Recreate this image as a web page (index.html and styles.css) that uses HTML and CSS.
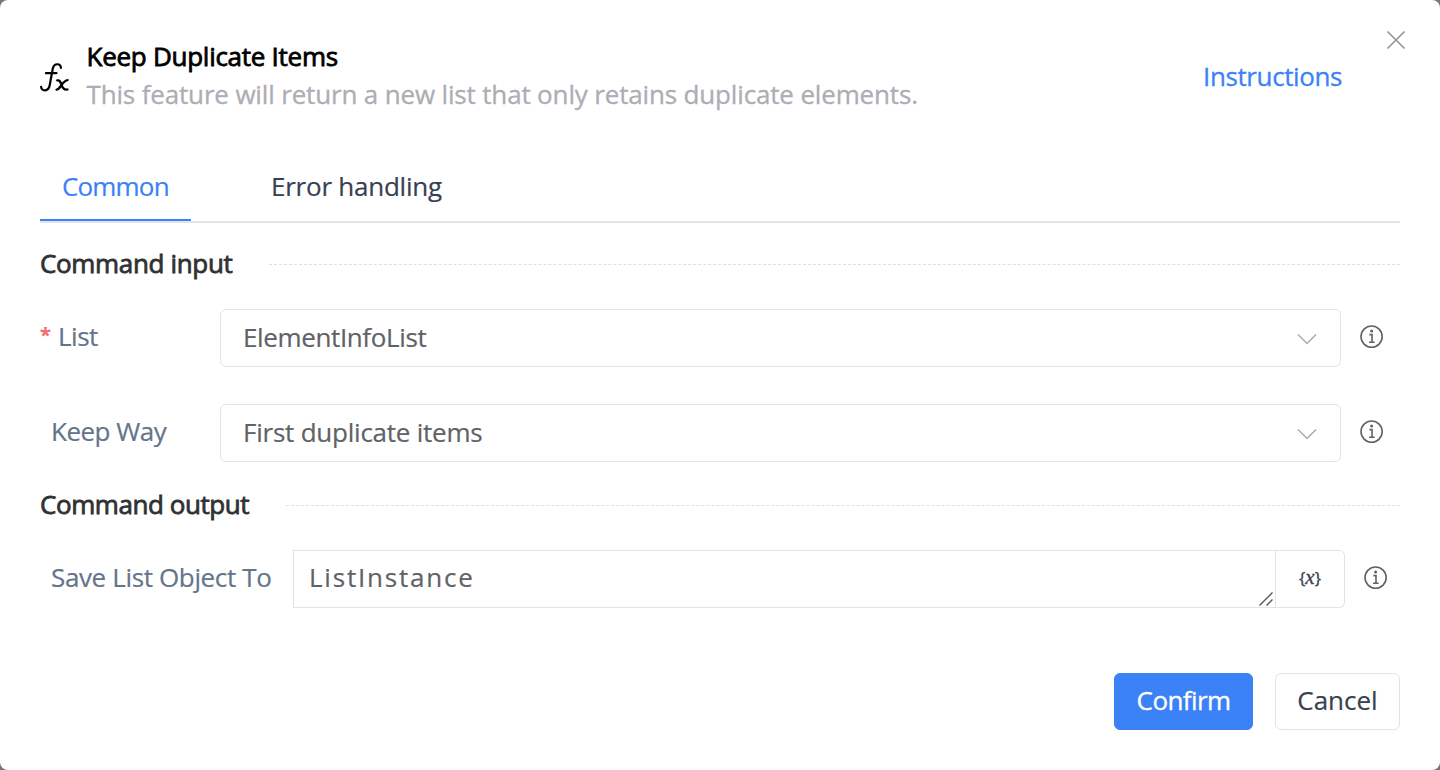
FILE: index.html
```
<!DOCTYPE html>
<html lang="en">
<head>
<meta charset="utf-8">
<title>Keep Duplicate Items</title>
<link rel="stylesheet" href="styles.css">
</head>
<body>
<div class="dialog">
  <header class="header">
    <svg class="fx" viewBox="0 0 30 32" aria-hidden="true">
      <path d="M20.9 6C21.2 1.4 14.2.4 12.8 6.5L9.7 23.3C8.5 30 1.2 29.5 1.1 24.8M6 11.2H16.5"/>
      <path class="fx-x" d="M17.2 18.4C19.9 17.9 20.4 19.8 21.5 22.9S23.8 28.3 27.5 27.5M27.6 18.1C24.8 18.2 22.6 21.5 21.2 23.4S18.4 27.7 16.6 27.6"/>
    </svg>
    <div class="heading">
      <h1 class="title">Keep Duplicate Items</h1>
      <p class="description">This feature will return a new list that only retains duplicate elements.</p>
    </div>
    <a class="instructions">Instructions</a>
    <svg class="close" viewBox="0 0 20 20" aria-hidden="true"><path d="M1.5 1.5 18.5 18.5M18.5 1.5 1.5 18.5"/></svg>
  </header>
  <nav class="tabs">
    <a class="tab tab-active">Common</a>
    <a class="tab tab-error">Error handling</a>
  </nav>
  <h2 class="section section-input">Command input</h2>
  <div class="row">
    <label class="label label-required"><i class="star">*</i>List</label>
    <div class="select">ElementInfoList
      <svg class="chevron" viewBox="0 0 20 12" aria-hidden="true"><path d="M1 1.5 10 10.5 19 1.5"/></svg></div>
    <svg class="info" viewBox="0 0 24 24" aria-hidden="true"><circle cx="11.6" cy="11.6" r="10.6"/><path d="M9.4 9.6H12V17.2M9 17.2H14.6"/><circle class="dot" cx="11.6" cy="6" r="1.5"/></svg>
  </div>
  <div class="row row-way">
    <label class="label">Keep Way</label>
    <div class="select select-way">First duplicate items
      <svg class="chevron" viewBox="0 0 20 12" aria-hidden="true"><path d="M1 1.5 10 10.5 19 1.5"/></svg></div>
    <svg class="info" viewBox="0 0 24 24" aria-hidden="true"><circle cx="11.6" cy="11.6" r="10.6"/><path d="M9.4 9.6H12V17.2M9 17.2H14.6"/><circle class="dot" cx="11.6" cy="6" r="1.5"/></svg>
  </div>
  <h2 class="section section-output">Command output</h2>
  <div class="row row-output">
    <label class="label label-wide">Save List Object To</label>
    <div class="field">ListInstance
      <svg class="grip" viewBox="0 0 16 16" aria-hidden="true"><path d="M1.5 14.5 14.5 1.5M8.5 14.5 14.5 8.5"/></svg></div>
    <button class="variable" aria-label="Insert variable">{<i class="var-x">x</i>}</button>
    <svg class="info" viewBox="0 0 24 24" aria-hidden="true"><circle cx="11.6" cy="11.6" r="10.6"/><path d="M9.4 9.6H12V17.2M9 17.2H14.6"/><circle class="dot" cx="11.6" cy="6" r="1.5"/></svg>
  </div>
  <footer class="footer">
    <button class="button primary">Confirm</button>
    <button class="button">Cancel</button>
  </footer>
</div>
</body>
</html>
```
FILE: styles.css
```
* { box-sizing: border-box; margin: 0; }
body { background: #777; font: 26px/38px "Open Sans", "Noto Sans", sans-serif; color: #303133; }
.dialog { width: 1440px; height: 770px; background: #fff; border-radius: 8px; padding: 0 40px; overflow: hidden; }
svg { fill: none; flex: none; }
.header { position: relative; display: flex; height: 155px; padding-top: 37px; }
.fx { width: 30px; height: 32px; margin-top: 25px; stroke: #000; stroke-width: 2.2; stroke-linecap: round; }
.fx-x { stroke-width: 2.3; }
.heading { margin-left: 16.5px; flex: 1; }
.title { font-size: 26px; font-weight: 400; color: #000; letter-spacing: -0.27px; -webkit-text-stroke: 0.8px #000; }
.description { color: #aeacb4; letter-spacing: -0.16px; -webkit-text-stroke: 0.3px #aeacb4; }
.instructions { margin: 20px 58px 0 0; color: #3b82f6; letter-spacing: -0.4px; -webkit-text-stroke: 0.3px #3b82f6; }
.close { position: absolute; right: -6px; top: 29.5px; width: 20px; height: 20px; stroke: #909399; stroke-width: 1.6; }
.tabs { display: flex; gap: 58px; height: 68px; border-bottom: 2px solid #e4e4ea; color: #374151; -webkit-text-stroke: 0.2px; }
.tab { height: 66px; padding: 12px 22px 0; }
.tab-active { width: 151px; color: #3b82f6; border-bottom: 2px solid #3b82f6; letter-spacing: -0.83px; }
.tab-error { letter-spacing: -0.24px; }
.section { display: flex; align-items: center; gap: 37px; height: 38px; padding-bottom: 2px; font-size: 26px; font-weight: 400; letter-spacing: -0.43px; -webkit-text-stroke: 0.8px #303133; }
.section::after { content: ""; flex: 1; border-top: 1px dashed #dcdfe6; position: relative; top: 1px; }
.section-input { margin: 22px 0 26px; letter-spacing: -0.34px; }
.row { display: flex; align-items: center; height: 58px; margin-bottom: 37px; }
.row-way { margin-bottom: 24px; }
.label { width: 180px; padding-left: 11px; color: #64748b; margin-top: -4px; letter-spacing: -0.5px; -webkit-text-stroke: 0.2px; }
.label-required { display: flex; padding-left: 0; }
.star { width: 18px; font-style: normal; font-size: 20px; line-height: 36px; font-weight: 700; color: #f56c6c; }
.select { display: flex; align-items: center; justify-content: space-between; width: 1121px; height: 58px; padding: 0 23px 2px 22px; border: 1px solid #e4e4e7; border-radius: 6px; color: #606266; letter-spacing: -0.37px; -webkit-text-stroke: 0.2px; }
.select-way { letter-spacing: -0.23px; }
.chevron { width: 20px; height: 12px; margin-top: 4px; stroke: #a8abb2; stroke-width: 1.5; }
.info { width: 24px; height: 24px; margin: -2px 0 0 19px; stroke: #606266; stroke-width: 1.6; }
.dot { fill: #606266; stroke: none; }
.section-output { margin-bottom: 26px; }
.row-output { margin-bottom: 65px; }
.label-wide { width: 253px; letter-spacing: -0.36px; }
.field { position: relative; width: 983px; height: 58px; padding: 7px 15px; border: 1px solid #e4e4e7; color: #606266; letter-spacing: 1.8px; -webkit-text-stroke: 0.2px; }
.grip { position: absolute; right: 1px; bottom: 0; width: 16px; height: 16px; stroke: #555; stroke-width: 1.4; }
.variable { width: 69px; height: 58px; border: 1px solid #e4e4e7; border-left: 0; border-radius: 0 6px 6px 0; background: #fff; color: #374151; font: 17px/24px "Open Sans", sans-serif; padding-bottom: 5px; -webkit-text-stroke: 0.3px #374151; }
.var-x { font-family: "Liberation Serif", serif; font-size: 21px; }
.footer { display: flex; justify-content: flex-end; gap: 22px; }
.button { width: 125px; height: 57px; border: 1px solid #e4e4e7; border-radius: 6px; background: #fff; color: #374151; font: inherit; padding: 0 0 3px; -webkit-text-stroke: 0.2px; }
.primary { width: 139px; background: #3b82f6; border-color: #3b82f6; color: #fff; letter-spacing: -0.6px; -webkit-text-stroke: 0.3px #fff; }
```
